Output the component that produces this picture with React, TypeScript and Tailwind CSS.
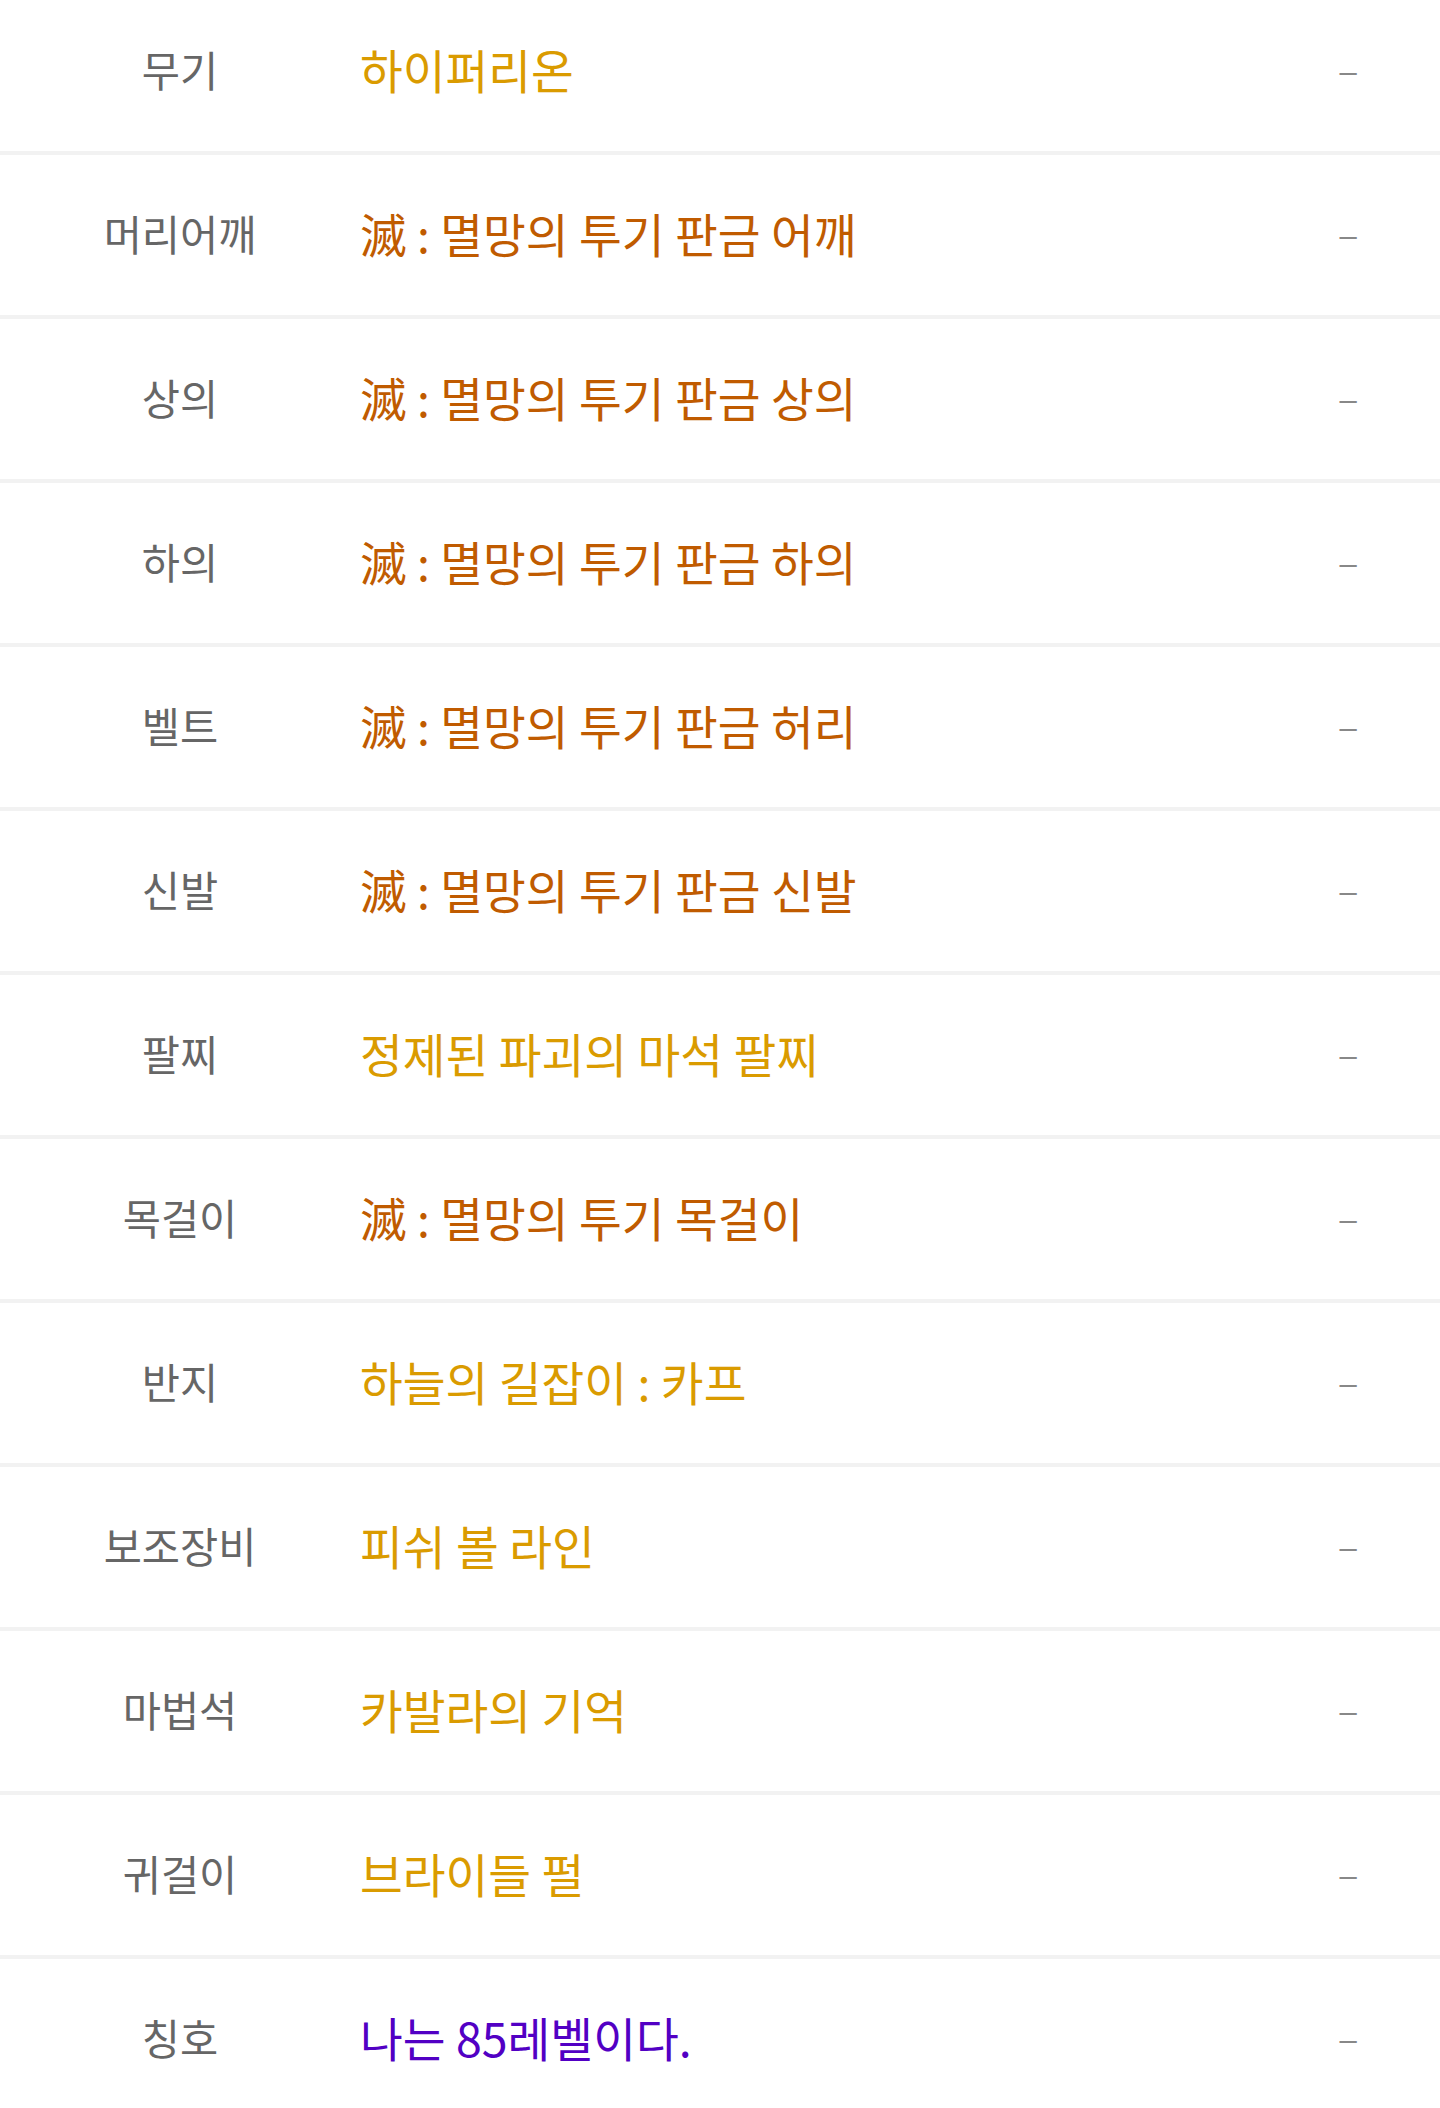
const rows: { label: string; value: string; grade: "legend" | "epic" | "title" }[] = [
  { label: "무기", value: "하이퍼리온", grade: "legend" },
  { label: "머리어깨", value: "滅 : 멸망의 투기 판금 어깨", grade: "epic" },
  { label: "상의", value: "滅 : 멸망의 투기 판금 상의", grade: "epic" },
  { label: "하의", value: "滅 : 멸망의 투기 판금 하의", grade: "epic" },
  { label: "벨트", value: "滅 : 멸망의 투기 판금 허리", grade: "epic" },
  { label: "신발", value: "滅 : 멸망의 투기 판금 신발", grade: "epic" },
  { label: "팔찌", value: "정제된 파괴의 마석 팔찌", grade: "legend" },
  { label: "목걸이", value: "滅 : 멸망의 투기 목걸이", grade: "epic" },
  { label: "반지", value: "하늘의 길잡이 : 카프", grade: "legend" },
  { label: "보조장비", value: "피쉬 볼 라인", grade: "legend" },
  { label: "마법석", value: "카발라의 기억", grade: "legend" },
  { label: "귀걸이", value: "브라이들 펄", grade: "legend" },
  { label: "칭호", value: "나는 85레벨이다.", grade: "title" },
];

const gradeColor = {
  legend: "text-[#da9b00]",
  epic: "text-[#c05b00]",
  title: "text-[#5200c4]",
};

export default function App() {
  return (
    <div className="min-h-screen overflow-hidden bg-white font-['Noto_Sans_CJK_KR','Noto_Sans',sans-serif]">
      <ul className="-mt-[9px]">
        {rows.map((row) => (
          <li
            key={row.label}
            className="grid h-[164px] grid-cols-[360px_1fr_184px] items-center border-b-4 border-[#f2f2f2] pb-[4px]"
          >
            <span className="text-center text-[41.5px] text-[#666666]">{row.label}</span>
            <span className={`text-[46.5px] ${gradeColor[row.grade]}`}>{row.value}</span>
            <span className="pt-[6px] text-center font-['Liberation_Sans',sans-serif] text-[31px] text-[#888888]">–</span>
          </li>
        ))}
      </ul>
    </div>
  );
}
